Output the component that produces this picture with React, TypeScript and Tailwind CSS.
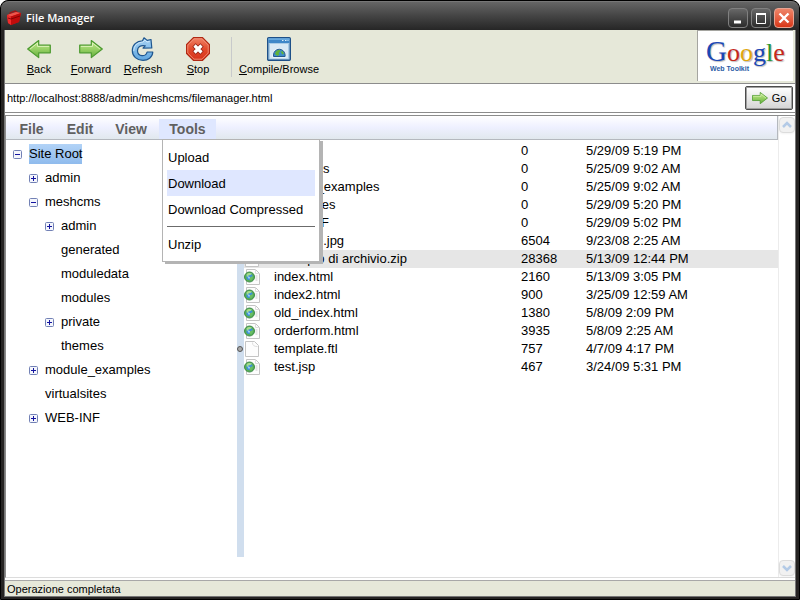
import type { ReactNode } from 'react';

interface IFile {
  name: string;
  size: number;
  date: string;
  web?: boolean;
  selected?: boolean;
}

const files: IFile[] = [
  { name: 'admin', size: 0, date: '5/29/09 5:19 PM' },
  { name: 'meshcms', size: 0, date: '5/25/09 9:02 AM' },
  { name: 'module_examples', size: 0, date: '5/25/09 9:02 AM' },
  { name: 'virtualsites', size: 0, date: '5/29/09 5:20 PM' },
  { name: 'WEB-INF', size: 0, date: '5/29/09 5:02 PM' },
  { name: 'example.jpg', size: 6504, date: '9/23/08 2:25 AM' },
  { name: 'Esempio di archivio.zip', size: 28368, date: '5/13/09 12:44 PM', selected: true },
  { name: 'index.html', size: 2160, date: '5/13/09 3:05 PM', web: true },
  { name: 'index2.html', size: 900, date: '3/25/09 12:59 AM', web: true },
  { name: 'old_index.html', size: 1380, date: '5/8/09 2:09 PM', web: true },
  { name: 'orderform.html', size: 3935, date: '5/8/09 2:25 AM', web: true },
  { name: 'template.ftl', size: 757, date: '4/7/09 4:17 PM' },
  { name: 'test.jsp', size: 467, date: '3/24/09 5:31 PM', web: true },
];

interface INode {
  name: string;
  open?: boolean;
  closed?: boolean;
  selected?: boolean;
  children?: INode[];
}

const tree: INode[] = [
  {
    name: 'Site Root',
    open: true,
    selected: true,
    children: [
      { name: 'admin', closed: true },
      {
        name: 'meshcms',
        open: true,
        children: [
          { name: 'admin', closed: true },
          { name: 'generated' },
          { name: 'moduledata' },
          { name: 'modules' },
          { name: 'private', closed: true },
          { name: 'themes' },
        ],
      },
      { name: 'module_examples', closed: true },
      { name: 'virtualsites' },
      { name: 'WEB-INF', closed: true },
    ],
  },
];

const ToolboxIcon = () => (
  <svg width="16" height="16" viewBox="0 0 16 16">
    <path d="M4 5V3l5-2 2 1v2" fill="none" stroke="#a31313" strokeWidth="1.2" />
    <path d="M1 5l9-3 5 1-2 9-8 3-3-2z" fill="#c41010" />
    <path d="M1 5l9-3 5 1-10 3.500z" fill="#f0554c" />
    <path d="M5 6.500L15 3l-2 9-8 3z" fill="#c00c0c" />
    <path d="M1 5l4 1.500V15l-3-2z" fill="#ee2c2c" />
    <path d="M2 8l3 1 9-3" fill="none" stroke="#700" strokeWidth=".8" />
  </svg>
);

const ArrowIcon = ({ back = false, size = 24 }: { back?: boolean; size?: number }) => (
  <svg width={size} height={size} viewBox="0 0 24 24">
    <defs>
      <linearGradient id="arrowGreen" x1="0" y1="0" x2="0" y2="1">
        <stop offset="0" stopColor="#c5e88f" />
        <stop offset=".5" stopColor="#98d166" />
        <stop offset="1" stopColor="#63ae3c" />
      </linearGradient>
    </defs>
    <g transform={back ? 'matrix(-1 0 0 1 24 0)' : undefined}>
      <path
        d="M.7 8.2h11.600V3.600L23.300 12l-11 8.600v-4.800H.7z"
        fill="url(#arrowGreen)"
        stroke="#4c9a2f"
        strokeWidth="1.2"
        strokeLinejoin="round"
      />
      <path d="M1.900 9.400h11.600V6l7.400 6" fill="none" stroke="#dcf3b8" />
    </g>
  </svg>
);

const RefreshIcon = () => (
  <svg width="24" height="24" viewBox="0 0 24 24">
    <defs>
      <linearGradient id="refreshBlue" x1="0" y1="0" x2="0" y2="1">
        <stop offset="0" stopColor="#a9d3f3" />
        <stop offset="1" stopColor="#5fa6e0" />
      </linearGradient>
    </defs>
    <path
      d="M13 .8l3.200 2.600 3.800-.9.800 8.500-8.800.1 2.200-2.300C9.500 7.700 6.300 10.300 6.500 14c.2 5.600 8.600 6.300 9.600 1h5.700C21.500 20.500 17 23.400 12 23.400 6 23.400 1.300 19.200 1.300 13.500 1.300 8 5.500 3.900 11.500 3.800z"
      fill="url(#refreshBlue)"
      stroke="#1f568f"
      strokeWidth="1.2"
      strokeLinejoin="round"
    />
    <path d="M2.800 14C2.800 8.500 6.500 5.200 12 5l2-2 2 2 2.500-.5" fill="none" stroke="#dcf0ff" strokeWidth=".8" />
  </svg>
);

const StopIcon = () => (
  <svg width="24" height="24" viewBox="0 0 24 24">
    <defs>
      <linearGradient id="stopRed" x1="0" y1="0" x2="0" y2="1">
        <stop offset="0" stopColor="#f08468" />
        <stop offset=".5" stopColor="#e2492c" />
        <stop offset="1" stopColor="#d6331b" />
      </linearGradient>
    </defs>
    <path d="M7.500.6h9l6.900 6.900v9l-6.900 6.900h-9L.6 16.500v-9z" fill="url(#stopRed)" stroke="#b02914" strokeWidth="1.2" />
    <path d="M8 1.800h8l6.200 6.200v8L16 22.200H8L1.800 16V8z" fill="none" stroke="#f59a80" strokeWidth=".8" />
    <path d="M8 8l8 8M16 8l-8 8" stroke="#8f1d10" strokeWidth="4.6" />
    <path d="M8.500 8.500l7 7M15.500 8.500l-7 7" stroke="#fff" strokeWidth="3.2" />
  </svg>
);

const BrowserIcon = () => (
  <svg width="24" height="24" viewBox="0 0 24 24">
    <rect x=".7" y=".7" width="22.6" height="22.6" rx="1" fill="#a9cbe6" stroke="#1e5088" strokeWidth="1.4" />
    <path d="M1.400 1.400h21.200v4.600H1.400z" fill="#3f87c8" />
    <path d="M1.400 1.400h21.200v1.400H1.400z" fill="#72b2e4" />
    <path d="M15 3.500h1.500M18 3.500h1.500M20.500 3.500h1" stroke="#d9edfb" />
    <path d="M3 7h18v14.500H3z" fill="#d9e9f5" />
    <path d="M5.500 20.500V18a6.800 6.800 0 0 1 13.600 0v2.500z" fill="#f6fbff" />
    <path d="M6.500 19.500V18a5.800 5.800 0 0 1 11.600 0v1.500z" fill="#3c8cca" stroke="#23588c" />
    <path d="M8 17c.5-2.500 2-4 4.500-4.300l1 1.800-2 1.500 1 1.500-2 1.500zM15 13.500l2 3-1.500 1-1.500-2z" fill="#63b337" />
  </svg>
);

const PageIcon = ({ web = false }: { web?: boolean }) => (
  <svg width="16" height="16" viewBox="0 0 16 16" className="block">
    <path
      d={web ? 'M2.500.5h9l4 4v11h-13z' : 'M1.500.5h9l4 4v11h-13z'}
      fill="#fdfdfd"
      stroke="#c4c4c4"
      strokeLinejoin="round"
    />
    <path d={web ? 'M11.500.5v4h4' : 'M8.500 1.500c0 3 1.500 4 5 4'} fill="none" stroke="#dedede" />
    {web && (
      <>
        <path d="M12.500 6v6" stroke="#e4e4e4" strokeWidth="2" />
        <circle cx="5.5" cy="8" r="5" fill="#57b04e" stroke="#3f8a4e" />
        <circle cx="5.5" cy="8" r="3.2" fill="#3d8edb" />
        <path d="M2.500 5.500C4 3.800 6 3.600 8 4.600L6.500 6l-2 .5-1.500 2z" fill="#a5dc8c" />
        <path d="M6 8.500l2.500-1.500.5 2-2 2.500-1.500-1z" fill="#6cc05c" />
        <path d="M4.500 7l1.500 1.500-.8 1.500-1.200-1z" fill="#a9d6fa" />
      </>
    )}
  </svg>
);

const TreeToggle = ({ open = false }: { open?: boolean }) => (
  <button aria-label={open ? 'Collapse' : 'Expand'} className="block">
    <svg width="9" height="9" viewBox="0 0 9 9" className="block">
      <rect x=".5" y=".5" width="8" height="8" rx="1" fill="#f4f6fc" stroke="#7281b5" />
      <path d={open ? 'M2 4.500h5' : 'M2 4.500h5M4.500 2v5'} stroke="#1414a0" />
    </svg>
  </button>
);

const TreeItem = ({ node }: { node: INode }) => (
  <li>
    <div className="flex h-6 items-center gap-[7px]">
      {node.open || node.closed ? <TreeToggle open={node.open} /> : <span className="w-[9px]" />}
      <span className={node.selected ? 'bg-linear-to-b from-[#b2d3f7] to-[#8fbbed] leading-5' : 'leading-5'}>
        {node.name}
      </span>
    </div>
    {node.children && (
      <ul className="pl-4">
        {node.children.map((child) => (
          <TreeItem key={child.name} node={child} />
        ))}
      </ul>
    )}
  </li>
);

const ToolButton = ({ icon, label, className }: { icon: ReactNode; label: string; className: string }) => (
  <button className={`flex flex-col items-center ${className}`}>
    {icon}
    <span className="leading-4 whitespace-nowrap">
      <u>{label[0]}</u>
      {label.slice(1)}
    </span>
  </button>
);

const TitleButton = ({ label, close = false, children }: { label: string; close?: boolean; children: ReactNode }) => (
  <button
    aria-label={label}
    className={`flex size-5 items-center justify-center rounded-sm border ${
      close
        ? 'border-[#e8a493] bg-linear-to-b from-[#ee8468] to-[#d93514]'
        : 'border-[#808080] bg-linear-to-b from-[#686868] to-[#2c2c2c]'
    }`}
  >
    <svg width="14" height="14" viewBox="0 0 14 14" fill="none" stroke="#fff">
      {children}
    </svg>
  </button>
);

const ScrollButton = ({ label, d }: { label: string; d: string }) => (
  <button
    aria-label={label}
    className="flex size-4 items-center justify-center rounded-sm border border-[#dcdcdc] bg-[#f1f1f1] shadow-xs"
  >
    <svg width="10" height="8" viewBox="0 0 10 8" fill="none" stroke="#b3cae6" strokeWidth="2.5">
      <path d={d} />
    </svg>
  </button>
);

const Logo = () => (
  <div className="flex w-24 flex-col items-start border-t border-l border-[#a5a5a0] bg-white pt-2 pl-2">
    <div className="flex items-baseline font-['Liberation_Serif',serif] text-[26px] leading-6 text-[#1b48b5] text-shadow-[1px_1px_1px_#bbb]">
      <span className="text-[29px]">G</span>
      <span className="text-[#c5281c]">o</span>
      <span className="text-[#e0a70e]">o</span>
      <span>g</span>
      <span className="text-[#259532]">l</span>
      <span className="text-[#c5281c]">e</span>
    </div>
    <div className="pl-1 font-['Liberation_Sans',sans-serif] text-[7px] leading-2 font-bold text-[#2a5ba5]">
      Web Toolkit
    </div>
  </div>
);

const ToolsMenu = () => (
  <div
    role="menu"
    className="absolute top-full left-[3px] z-10 w-[158px] border border-[#b4b4b4] bg-white p-1 text-[13px] font-normal text-black shadow-[3px_2px_0_#b4b4b4]"
  >
    <button role="menuitem" className="block h-[26px] w-full px-px pt-px text-left">
      Upload
    </button>
    <button role="menuitem" className="block h-[26px] w-full bg-[#dfe7ff] px-px pt-px text-left">
      Download
    </button>
    <button role="menuitem" className="block h-[26px] w-full px-px pt-px text-left whitespace-nowrap">
      Download Compressed
    </button>
    <hr className="my-1 border-[#6b6b6b]" />
    <button role="menuitem" className="block h-[26px] w-full px-px pt-px text-left">
      Unzip
    </button>
  </div>
);

export default function App() {
  return (
    <div className="bg-white">
      <div className="flex min-h-screen flex-col rounded-t-lg border border-black bg-[#262423] font-['Liberation_Sans',sans-serif] text-[11px] text-black">
        <header className="flex h-[29px] items-center gap-1 rounded-t-lg border-t border-[#777] bg-linear-to-b from-[#666] via-[#444] to-[#262626] px-[5px] pt-1">
          <ToolboxIcon />
          <h1 className="flex-1 font-['Open_Sans',sans-serif] text-[11px] font-semibold text-white">File Manager</h1>
          <div className="flex gap-[3px]">
            <TitleButton label="Minimize">
              <path d="M3 11h7" strokeWidth="3" />
            </TitleButton>
            <TitleButton label="Maximize">
              <path d="M2.500 2v10.500h9V2" />
              <path d="M2 3h10" strokeWidth="2" />
            </TitleButton>
            <TitleButton label="Close" close>
              <path d="M2.500 2.500l9 9M11.500 2.500l-9 9" strokeWidth="2.4" />
            </TitleButton>
          </div>
        </header>

        <main className="mx-[3px] mb-[2px] flex flex-1 flex-col border-x border-b border-[#777] bg-white">
          <div className="flex h-[54px] items-stretch justify-between border-b border-[#8c8c8c] bg-[#e6e8d9] pr-[2px] pb-[2px]">
            <div className="flex items-center pt-[2px] pl-2">
              <ToolButton className="w-[52px]" icon={<ArrowIcon back />} label="Back" />
              <ToolButton className="w-[52px]" icon={<ArrowIcon />} label="Forward" />
              <ToolButton className="w-[52px]" icon={<RefreshIcon />} label="Refresh" />
              <ToolButton className="w-[58px]" icon={<StopIcon />} label="Stop" />
              <div className="ml-1 h-10 w-px bg-[#c8cacb]" />
              <ToolButton className="w-[94px]" icon={<BrowserIcon />} label="Compile/Browse" />
            </div>
            <Logo />
          </div>

          <form className="flex h-[29px] items-center border-b border-[#8c8c8c] pr-[2px]">
            <input
              aria-label="Address"
              className="min-w-0 flex-1 px-[2px] outline-none"
              defaultValue="http://localhost:8888/admin/meshcms/filemanager.html"
            />
            <button
              type="button"
              className="flex h-6 w-12 items-center justify-center gap-1 rounded-xs border border-[#4c4c4c] bg-linear-to-b from-white to-[#d4d4d4] inset-ring inset-ring-[#a0a0a0]"
            >
              <ArrowIcon size={16} />
              Go
            </button>
          </form>

          <div className="mt-[2px] flex flex-1 border-t border-b border-l border-t-[#8c8c8c] border-b-[#dcdcdc] border-l-[#8c8c8c] text-[13px]">
            <div className="min-w-0 flex-1">
              <nav className="flex h-6 items-end border-r border-b border-[#b4b8be] bg-linear-to-b from-white via-[#eef0ff] to-[#e1e8ee] text-[14px] font-bold text-[#606060]">
                <button className="h-5 w-[51px]">File</button>
                <button className="h-5 w-[46px]">Edit</button>
                <button className="h-5 w-14">View</button>
                <div className="relative">
                  <button className="block h-5 w-[57px] bg-[#dfe7ff]">Tools</button>
                  <ToolsMenu />
                </div>
              </nav>
              <div className="flex">
                <ul className="w-[231px] shrink-0 pt-[2px] pl-[7px]">
                  {tree.map((node) => (
                    <TreeItem key={node.name} node={node} />
                  ))}
                </ul>
                <div className="flex min-h-[417px] w-[7px] items-center bg-[#d0deee]">
                  <span className="size-[6px] rounded-full border border-[#555] bg-[#aaa]" />
                </div>
                <div className="min-w-0 flex-1 pt-[2px]">
                  <table className="w-full table-fixed border-collapse">
                    <colgroup>
                      <col className="w-[30px]" />
                      <col className="w-[247px]" />
                      <col className="w-[65px]" />
                      <col />
                    </colgroup>
                    <tbody>
                      {files.map((file) => (
                        <tr key={file.name} className={file.selected ? 'h-[18px] bg-[#e6e6e6]' : 'h-[18px]'}>
                          <td className="p-0">
                            <PageIcon web={file.web} />
                          </td>
                          <td className="p-0 leading-[18px]">{file.name}</td>
                          <td className="p-0 leading-[18px]">{file.size}</td>
                          <td className="p-0 leading-[18px]">{file.date}</td>
                        </tr>
                      ))}
                    </tbody>
                  </table>
                </div>
              </div>
            </div>
            <div className="flex w-[17px] flex-col items-center justify-between border-l border-[#ececec] py-px">
              <ScrollButton label="Scroll up" d="M1 6l4-4 4 4" />
              <ScrollButton label="Scroll down" d="M1 2l4 4 4-4" />
            </div>
          </div>

          <footer className="mt-[2px] h-4 border-t border-[#a8a8a8] bg-[#e6e8d9] px-[2px] leading-4">
            Operazione completata
          </footer>
        </main>
      </div>
    </div>
  );
}
